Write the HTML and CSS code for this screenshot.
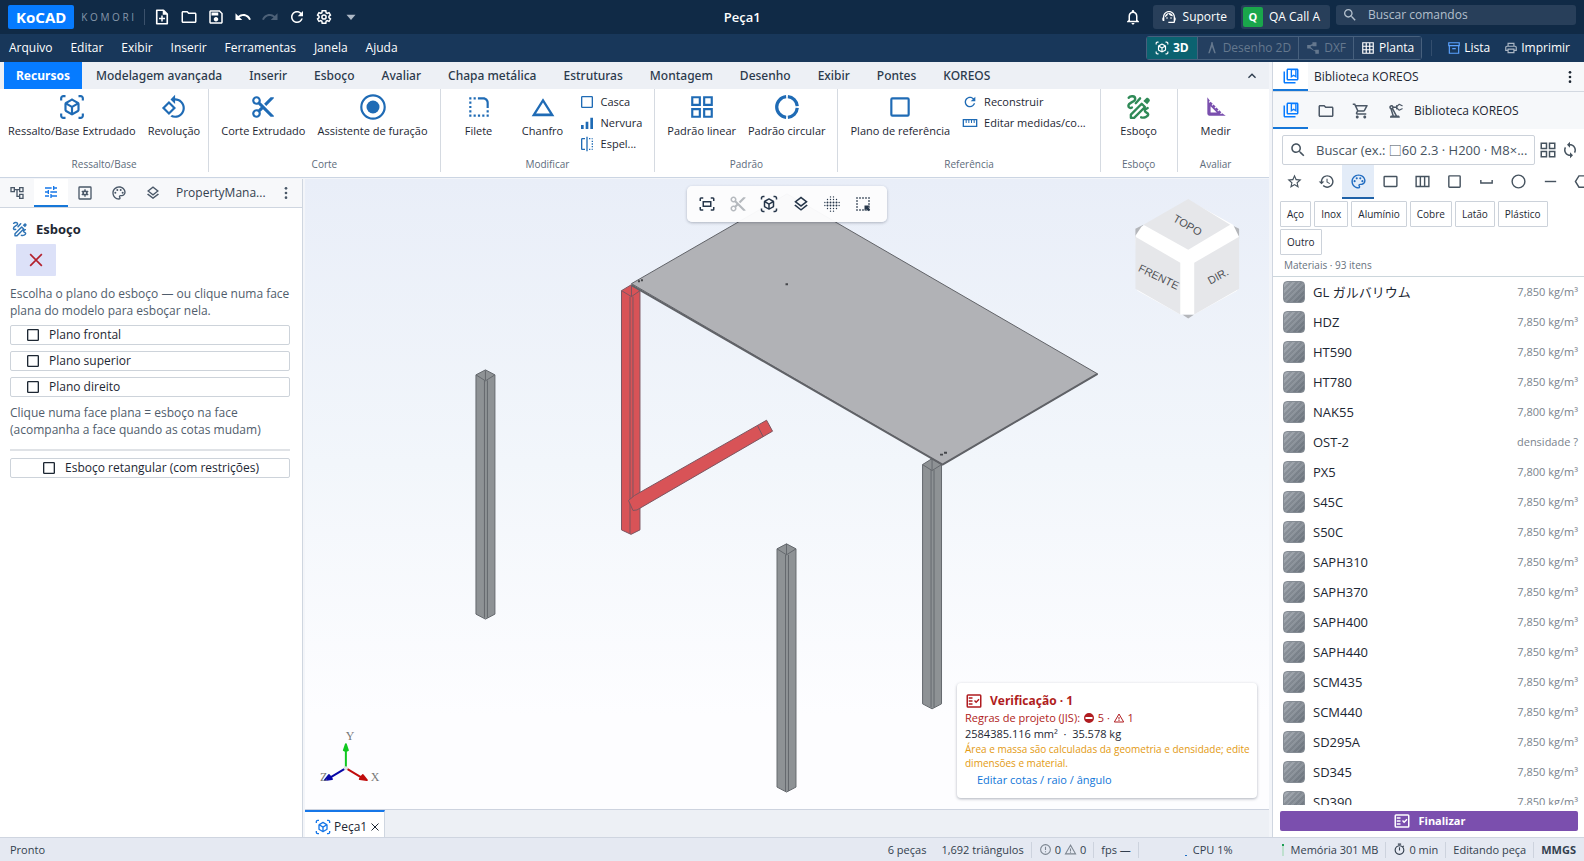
FILE: index.html
```html
<!DOCTYPE html>
<html lang="pt-BR">
<head>
<meta charset="utf-8">
<title>Peça1 - KoCAD</title>
<link rel="stylesheet" href="styles.css">
</head>
<body>
<svg class="sprite" aria-hidden="true">
<symbol id="i-new" viewBox="0 0 24 24"><path d="M14 3H5v18h14V8z" fill="none" stroke="currentColor" stroke-width="2.2" stroke-linejoin="round"/><path d="M13 2v7h7zM11 10h2v3h3v2h-3v3h-2v-3H8v-2h3z"/></symbol>
<symbol id="i-folder" viewBox="0 0 24 24"><path d="M9.17 6l2 2H20v10H4V6h5.17M10 4H4c-1.1 0-1.99.9-1.99 2L2 18c0 1.100.9 2 2 2h16c1.100 0 2-.9 2-2V8c0-1.100-.9-2-2-2h-8l-2-2z"/></symbol>
<symbol id="i-save" viewBox="0 0 24 24"><path fill-rule="evenodd" d="M17 3H5c-1.110 0-2 .9-2 2v14c0 1.100.89 2 2 2h14c1.100 0 2-.9 2-2V7l-4-4zm2 16H5V5h11.170L19 7.830V19zm-7-7c-1.660 0-3 1.340-3 3s1.340 3 3 3 3-1.340 3-3-1.340-3-3-3zM6 6h9v4H6z"/></symbol>
<symbol id="i-undo" viewBox="0 0 24 24"><path d="M12.500 8c-2.650 0-5.050.99-6.900 2.600L2 7v9h9l-3.620-3.620c1.390-1.160 3.160-1.880 5.120-1.880 3.540 0 6.550 2.310 7.600 5.500l2.370-.78C21.080 11.030 17.150 8 12.500 8z"/></symbol>
<symbol id="i-redo" viewBox="0 0 24 24"><path d="M18.400 10.600C16.550 8.990 14.150 8 11.500 8c-4.650 0-8.580 3.030-9.960 7.220L3.900 16c1.050-3.190 4.050-5.500 7.600-5.500 1.950 0 3.730.72 5.120 1.880L13 16h9V7l-3.600 3.600z"/></symbol>
<symbol id="i-refresh" viewBox="0 0 24 24"><path d="M17.650 6.350C16.200 4.900 14.210 4 12 4c-4.420 0-7.990 3.580-7.990 8s3.570 8 7.990 8c3.730 0 6.840-2.550 7.730-6h-2.080c-.82 2.330-3.040 4-5.650 4-3.310 0-6-2.690-6-6s2.690-6 6-6c1.660 0 3.140.69 4.220 1.780L13 11h7V4l-2.350 2.350z"/></symbol>
<symbol id="i-gear" viewBox="0 0 24 24"><path fill="none" stroke="currentColor" stroke-width="2" d="M18.600 12.900c.1-.6.1-1.200 0-1.800l2-1.600-1.900-3.300-2.400 1c-.5-.4-1-.7-1.500-.9L14.400 3.600h-4.800l-.4 2.700c-.6.2-1.100.5-1.500.9l-2.400-1-1.900 3.300 2 1.600c-.1.6-.1 1.200 0 1.800l-2 1.600 1.900 3.300 2.400-1c.5.4 1 .7 1.500.9l.4 2.700h4.800l.4-2.700c.6-.2 1.100-.5 1.500-.9l2.400 1 1.900-3.300z"/><circle cx="12" cy="12" r="2.800" fill="none" stroke="currentColor" stroke-width="2"/></symbol>
<symbol id="i-cube" viewBox="0 0 24 24"><path fill-rule="evenodd" d="M3 4c0-.55.45-1 1-1h2V1H4C2.340 1 1 2.340 1 4v2h2V4zM3 20v-2H1v2c0 1.660 1.340 3 3 3h2v-2H4c-.55 0-1-.45-1-1zM20 1h-2v2h2c.55 0 1 .45 1 1v2h2V4c0-1.660-1.340-3-3-3zM21 20c0 .55-.45 1-1 1h-2v2h2c1.660 0 3-1.340 3-3v-2h-2v2zM19 14.870V9.130c0-.72-.38-1.380-1-1.730l-5-2.880c-.31-.18-.65-.27-1-.27s-.69.090-1 .27L6 7.390c-.62.36-1 1.020-1 1.740v5.740c0 .72.38 1.380 1 1.730l5 2.880c.31.180.65.270 1 .27s.69-.090 1-.27l5-2.880c.62-.35 1-1.010 1-1.730zm-8 2.300l-4-2.300v-4.630l4 2.330v4.600zm1-6.330L8.040 8.530 12 6.250l3.960 2.280L12 10.840zm5 4.030l-4 2.300v-4.600l4-2.330v4.630z"/></symbol>
<symbol id="i-cut" viewBox="0 0 24 24"><path fill-rule="evenodd" d="M9.640 7.640c.23-.5.36-1.050.36-1.640 0-2.210-1.790-4-4-4S2 3.790 2 6s1.790 4 4 4c.59 0 1.140-.13 1.640-.36L10 12l-2.360 2.360C7.140 14.130 6.590 14 6 14c-2.210 0-4 1.790-4 4s1.790 4 4 4 4-1.790 4-4c0-.59-.13-1.140-.36-1.640L12 14l7 7h3v-1L9.640 7.640zM6 8c-1.100 0-2-.89-2-2s.9-2 2-2 2 .89 2 2-.9 2-2 2zm0 12c-1.100 0-2-.89-2-2s.9-2 2-2 2 .89 2 2-.9 2-2 2zM19 3l-6 6 2 2 7-7V3z"/></symbol>
<symbol id="i-revolve" viewBox="0 0 24 24"><path fill-rule="evenodd" d="M7.340 6.410L.86 12.900l6.490 6.480 6.490-6.480-6.500-6.490zM3.690 12.900l3.660-3.660L11 12.900l-3.660 3.660-3.650-3.660zm15.670-6.260C17.610 4.880 15.300 4 13 4V.76L8.760 5 13 9.240V6c1.790 0 3.580.68 4.950 2.050 2.730 2.730 2.730 7.170 0 9.900C16.580 19.320 14.790 20 13 20c-.97 0-1.940-.21-2.840-.61l-1.490 1.490C10.020 21.620 11.510 22 13 22c2.300 0 4.610-.88 6.360-2.640 3.520-3.510 3.520-9.210 0-12.720z"/></symbol>
<symbol id="i-hole" viewBox="0 0 24 24"><circle cx="12" cy="12" r="10.800" fill="none" stroke="currentColor" stroke-width="2"/><circle cx="12" cy="12" r="6"/></symbol>
<symbol id="i-fillet" viewBox="0 0 24 24"><path d="M19 19h2v2h-2v-2zm0-2h2v-2h-2v2zM3 13h2v-2H3v2zm0 4h2v-2H3v2zm0-8h2V7H3v2zm0-4h2V3H3v2zm4 0h2V3H7v2zm8 16h2v-2h-2v2zm-4 0h2v-2h-2v2zm-4 0h2v-2H7v2zm-4 0h2v-2H3v2zM21 8c0-2.760-2.240-5-5-5h-5v2h5c1.650 0 3 1.350 3 3v5h2V8z"/></symbol>
<symbol id="i-triangle" viewBox="0 0 24 24"><path fill-rule="evenodd" d="M12 7.770L18.390 18H5.610L12 7.770M12 4L1.500 20.500h21L12 4z"/></symbol>
<symbol id="i-square" viewBox="0 0 24 24"><rect x="4" y="4" width="16" height="16" rx="1" fill="none" stroke="currentColor" stroke-width="2"/></symbol>
<symbol id="i-bars" viewBox="0 0 24 24"><path d="M3 15h4v6H3zM10 10h4v11h-4zM17 4h4v17h-4z"/></symbol>
<symbol id="i-flip" viewBox="0 0 24 24"><path d="M15 21h2v-2h-2v2zm4-12h2V7h-2v2zM3 5v14c0 1.100.9 2 2 2h4v-2H5V5h4V3H5c-1.100 0-2 .9-2 2zm16-2v2h2c0-1.100-.9-2-2-2zm-8 20h2V1h-2v22zm8-6h2v-2h-2v2zM15 5h2V3h-2v2zm4 8h2v-2h-2v2zm0 8c1.100 0 2-.9 2-2h-2v2z"/></symbol>
<symbol id="i-grid" viewBox="0 0 24 24"><path fill="none" stroke="currentColor" stroke-width="2" d="M3 3h7v7H3zM14 3h7v7h-7zM3 14h7v7H3zM14 14h7v7h-7z"/></symbol>
<symbol id="i-ring" viewBox="0 0 24 24"><circle cx="12" cy="12" r="9.500" fill="none" stroke="currentColor" stroke-width="3" pathLength="360" stroke-dasharray="80 10 170 10 80 10" stroke-dashoffset="-5"/></symbol>
<symbol id="i-ruler" viewBox="0 0 24 24"><path d="M2 7h20v10H2z" fill="none" stroke="currentColor" stroke-width="2"/><path d="M5.500 7h1.500v5H5.500zM9.500 7H11v5H9.500zM13.500 7H15v5h-1.500zM17.500 7H19v5h-1.500z"/></symbol>
<symbol id="i-draw" viewBox="0 0 24 24"><path fill="none" stroke="currentColor" stroke-width="2.200" stroke-linecap="round" stroke-linejoin="round" d="M2.500 3.500C4 1.500 8.500 1.500 8.500 4.500S2 7.500 2.200 11c.1 1.700 1.800 2.300 3.300 1.500M4.500 22v-3L14.500 9l3 3-10 10zM9 8.500l4-4.500M14 21.500c2.500.8 6.500-.5 6.500-2.700 0-1.700-3.200-1.600-3.200-3.400 0-1.200 1.500-1.700 2.700-2.400"/><path d="M16 6.500l2.800-2.800c1.200-1.200 4.200 1.700 3 3L19.500 9.500z"/></symbol>
<symbol id="i-measure" viewBox="0 0 24 24"><path fill-rule="evenodd" d="M17.660 17.660l-1.060 1.060-.71-.71 1.060-1.060-1.940-1.940-1.060 1.060-.71-.71 1.060-1.060-1.940-1.940-1.060 1.060-.71-.71 1.060-1.060L9.700 9.700l-1.060 1.060-.71-.71 1.060-1.060-1.940-1.940-1.060 1.060-.71-.71 1.060-1.060L4 3v15c0 1.100.9 2 2 2h15zM7 17v-5.760L12.760 17H7z"/></symbol>
<symbol id="i-bell" viewBox="0 0 24 24"><path fill-rule="evenodd" d="M12 22c1.100 0 2-.9 2-2h-4c0 1.100.89 2 2 2zm6-6v-5c0-3.070-1.640-5.640-4.500-6.320V4c0-.83-.67-1.500-1.500-1.500s-1.500.67-1.500 1.500v.68C7.630 5.360 6 7.920 6 11v5l-2 2v1h16v-1l-2-2zm-2 1H8v-6c0-2.480 1.510-4.500 4-4.500s4 2.020 4 4.500v6z"/></symbol>
<symbol id="i-agent" viewBox="0 0 24 24"><path d="M21 12.220C21 6.730 16.740 3 12 3c-4.690 0-9 3.650-9 9.280-.6.340-1 .98-1 1.720v2c0 1.100.9 2 2 2h1v-6.100c0-3.870 3.130-7 7-7s7 3.130 7 7V19h-8v2h8c1.100 0 2-.9 2-2v-1.220c.59-.31 1-.92 1-1.640v-2.300c0-.7-.41-1.310-1-1.620zM18 11.030C17.520 8.180 15.040 6 12.050 6c-3.030 0-6.290 2.510-6.030 6.450 2.470-1.010 4.330-3.210 4.860-5.890 1.310 2.630 4 4.440 7.120 4.470z"/><circle cx="9" cy="13.500" r="1.200"/><circle cx="15" cy="13.500" r="1.200"/></symbol>
<symbol id="i-search" viewBox="0 0 24 24"><path fill-rule="evenodd" d="M15.500 14h-.79l-.28-.27C15.410 12.590 16 11.110 16 9.500 16 5.910 13.090 3 9.500 3S3 5.910 3 9.500 5.910 16 9.500 16c1.610 0 3.090-.59 4.230-1.570l.27.28v.79l5 4.990L20.490 19l-4.990-5zm-6 0C7.010 14 5 11.990 5 9.500S7.010 5 9.500 5 14 7.010 14 9.500 11.990 14 9.500 14z"/></symbol>
<symbol id="i-books" viewBox="0 0 24 24"><path fill-rule="evenodd" d="M4 6H2v14c0 1.100.9 2 2 2h14v-2H4V6zM20 2H8c-1.100 0-2 .9-2 2v12c0 1.100.9 2 2 2h12c1.100 0 2-.9 2-2V4c0-1.100-.9-2-2-2zm0 14H8V4h12v12z"/><path d="M12.500 3.500h6v9.500l-3-2-3 2z" fill="none" stroke="currentColor" stroke-width="1.800"/></symbol>
<symbol id="i-cart" viewBox="0 0 24 24"><path fill-rule="evenodd" d="M15.550 13c.75 0 1.410-.41 1.750-1.030l3.580-6.490c.37-.66-.11-1.480-.87-1.480H5.210l-.94-2H1v2h2l3.600 7.590-1.350 2.440C4.520 15.370 5.480 17 7 17h12v-2H7l1.100-2h7.450zM6.160 6h12.150l-2.760 5H8.530L6.160 6zM7 18c-1.100 0-1.990.9-1.990 2S5.900 22 7 22s2-.9 2-2-.9-2-2-2zm10 0c-1.100 0-1.990.9-1.990 2s.89 2 1.990 2 2-.9 2-2-.9-2-2-2z"/></symbol>
<symbol id="i-robot" viewBox="0 0 24 24"><path fill-rule="evenodd" d="M19.930 8.350l-3.600 1.680L14 7.700V6.300l2.330-2.330 3.600 1.680c.38.18.82.01 1-.36.18-.38.01-.82-.36-1l-3.920-1.830c-.38-.18-.83-.1-1.130.2L13.780 4.400c-.18-.24-.46-.4-.78-.4-.55 0-1 .45-1 1v1H8.820C8.400 4.840 7.300 4 6 4 4.340 4 3 5.340 3 7c0 1.100.6 2.050 1.480 2.580L7.080 18H6c-1.100 0-2 .9-2 2v1h13v-1c0-1.100-.9-2-2-2h-1.620L8.410 8.770c.17-.24.31-.49.41-.77H12v1c0 .55.45 1 1 1 .32 0 .6-.16.78-.4l1.740 1.740c.3.3.75.38 1.130.2l3.920-1.830c.38-.18.54-.62.36-1-.18-.37-.62-.54-1-.36zM6 8c-.55 0-1-.45-1-1s.45-1 1-1 1 .45 1 1-.45 1-1 1zm5.110 10H9.170l-2.460-8h.1l4.300 8z"/></symbol>
<symbol id="i-sync" viewBox="0 0 24 24"><path d="M12 4V1L8 5l4 4V6c3.310 0 6 2.690 6 6 0 1.010-.25 1.970-.7 2.800l1.460 1.460C19.540 15.030 20 13.570 20 12c0-4.420-3.580-8-8-8zm0 14c-3.310 0-6-2.690-6-6 0-1.010.25-1.970.7-2.800L5.240 7.740C4.460 8.970 4 10.430 4 12c0 4.420 3.580 8 8 8v3l4-4-4-4v3z"/></symbol>
<symbol id="i-star" viewBox="0 0 24 24"><path fill-rule="evenodd" d="M22 9.240l-7.190-.62L12 2 9.190 8.630 2 9.240l5.460 4.730L5.820 21 12 17.270 18.180 21l-1.630-7.030L22 9.240zM12 15.400l-3.760 2.270 1-4.280-3.320-2.880 4.380-.38L12 6.100l1.710 4.040 4.380.38-3.320 2.880 1 4.280L12 15.400z"/></symbol>
<symbol id="i-history" viewBox="0 0 24 24"><path d="M13 3c-4.970 0-9 4.030-9 9H1l3.890 3.890.07.14L9 12H6c0-3.870 3.130-7 7-7s7 3.130 7 7-3.130 7-7 7c-1.930 0-3.680-.79-4.940-2.060l-1.420 1.420C8.270 19.990 10.510 21 13 21c4.970 0 9-4.030 9-9s-4.030-9-9-9zm-1 5v5l4.280 2.540.72-1.210-3.500-2.080V8H12z"/></symbol>
<symbol id="i-palette" viewBox="0 0 24 24"><path fill-rule="evenodd" d="M12 22C6.490 22 2 17.510 2 12S6.490 2 12 2s10 4.040 10 9c0 3.310-2.690 6-6 6h-1.770c-.28 0-.5.22-.5.5 0 .12.050.23.13.33.41.47.64 1.060.64 1.670 0 1.380-1.120 2.500-2.500 2.500zm0-18c-4.410 0-8 3.590-8 8s3.590 8 8 8c.28 0 .5-.22.5-.5 0-.16-.080-.28-.14-.35-.41-.46-.63-1.050-.63-1.650 0-1.380 1.120-2.500 2.500-2.500H16c2.210 0 4-1.790 4-4 0-3.860-3.590-7-8-7z"/><circle cx="6.500" cy="11.500" r="1.500"/><circle cx="9.500" cy="7.500" r="1.500"/><circle cx="14.500" cy="7.500" r="1.500"/><circle cx="17.500" cy="11.500" r="1.500"/></symbol>
<symbol id="i-layers" viewBox="0 0 24 24"><path fill-rule="evenodd" d="M11.990 18.540l-7.370-5.730L3 14.070l9 7 9-7-1.630-1.270zM12 16l7.360-5.730L21 9l-9-7-9 7 1.630 1.270L12 16zm0-11.470L17.740 9 12 13.470 6.260 9 12 4.530z"/></symbol>
<symbol id="i-tune" viewBox="0 0 24 24"><path d="M3 17v2h6v-2H3zM3 5v2h10V5H3zm10 16v-2h8v-2h-8v-2h-2v6h2zM7 9v2H3v2h4v2h2V9H7zm14 4v-2H11v2h10zm-6-4h2V7h4V5h-4V3h-2v6z"/></symbol>
<symbol id="i-tree" viewBox="0 0 24 24"><path fill-rule="evenodd" d="M22 11V3h-7v3H9V3H2v8h7V8h2v10h4v3h7v-8h-7v3h-2V8h2v3h7zM7 9H4V5h3v4zm10 6h3v4h-3v-4zm0-10h3v4h-3V5z"/></symbol>
<symbol id="i-config" viewBox="0 0 24 24"><rect x="3" y="3" width="18" height="18" rx="1" fill="none" stroke="currentColor" stroke-width="2"/><circle cx="12" cy="12" r="2.800" fill="none" stroke="currentColor" stroke-width="2.400"/><path d="M12 6.500v11M7.200 9.200l9.600 5.600M7.200 14.800l9.600-5.600" stroke="currentColor" stroke-width="2" stroke-dasharray="2 7.100"/></symbol>
<symbol id="i-more" viewBox="0 0 24 24"><circle cx="12" cy="5" r="2"/><circle cx="12" cy="12" r="2"/><circle cx="12" cy="19" r="2"/></symbol>
<symbol id="i-up" viewBox="0 0 24 24"><path d="M12 8l-6 6 1.410 1.410L12 10.830l4.590 4.580L18 14z"/></symbol>
<symbol id="i-down" viewBox="0 0 24 24"><path d="M6 9h12l-6 7z"/></symbol>
<symbol id="i-close" viewBox="0 0 24 24"><path d="M5 5l14 14M19 5L5 19" fill="none" stroke="currentColor" stroke-width="2"/></symbol>
<symbol id="i-check" viewBox="0 0 24 24"><rect x="3" y="4" width="18" height="16" rx="1" fill="none" stroke="currentColor" stroke-width="2"/><path d="M19.410 10.420L17.990 9l-3.170 3.170-1.410-1.420L12 12.160 14.820 15l4.590-4.580zM5 7h5v2H5zM5 11h5v2H5zM5 15h5v2H5z"/></symbol>
<symbol id="i-timer" viewBox="0 0 24 24"><path fill-rule="evenodd" d="M15 1H9v2h6V1zm-4 13h2V8h-2v6zm8.030-6.610l1.420-1.420c-.43-.51-.9-.99-1.410-1.410l-1.420 1.420C16.070 4.740 14.120 4 12 4c-4.970 0-9 4.030-9 9s4.020 9 9 9 9-4.030 9-9c0-2.120-.74-4.070-1.970-5.610zM12 20c-3.870 0-7-3.130-7-7s3.130-7 7-7 7 3.130 7 7-3.130 7-7 7z"/></symbol>
<symbol id="i-error" viewBox="0 0 24 24"><circle cx="12" cy="12" r="9" fill="none" stroke="currentColor" stroke-width="2"/><path d="M11 7h2v6h-2zM11 15h2v2h-2z"/></symbol>
<symbol id="i-warn" viewBox="0 0 24 24"><path d="M12 4L2.700 20h18.600z" fill="none" stroke="currentColor" stroke-width="2"/><path d="M11 10h2v5h-2zM11 16h2v2h-2z"/></symbol>
<symbol id="i-stop" viewBox="0 0 24 24"><path fill-rule="evenodd" d="M12 2a10 10 0 100 20 10 10 0 000-20zM5 10h14v4H5z"/></symbol>
<symbol id="i-print" viewBox="0 0 24 24"><path fill-rule="evenodd" d="M19 8h-1V3H6v5H5c-1.660 0-3 1.340-3 3v6h4v4h12v-4h4v-6c0-1.660-1.340-3-3-3zM8 5h8v3H8V5zm8 14H8v-4h8v4zm2-4v-2H6v2H4v-4c0-.55.45-1 1-1h14c.55 0 1 .45 1 1v4h-2z"/></symbol>
<symbol id="i-table" viewBox="0 0 24 24"><path d="M3 3h18v18H3zM9 3v18M15 3v18M3 9h18M3 15h18" fill="none" stroke="currentColor" stroke-width="2"/></symbol>
<symbol id="i-box" viewBox="0 0 24 24"><path d="M3 3h18v5H3zM4 8v13h16V8M9 13h6" fill="none" stroke="currentColor" stroke-width="2"/></symbol>
<symbol id="i-compass" viewBox="0 0 24 24"><path d="M10.500 2h3v3l5 16H16l-4-11-4 11H5.500l5-16z"/></symbol>
<symbol id="i-share" viewBox="0 0 24 24"><path d="M11 2h7v7h-7v-1.500L7.500 10l6 6H16v-1h6v7h-6v-4l-9-5H2V7h5l4-2z"/></symbol>
<symbol id="i-fit" viewBox="0 0 24 24"><path fill="none" stroke="currentColor" stroke-width="2" d="M17 4h3c.6 0 1 .4 1 1v3M7 4H4c-.6 0-1 .4-1 1v3M21 16v3c0 .6-.4 1-1 1h-3M3 16v3c0 .6.400 1 1 1h3M7 9h10v6H7z"/></symbol>
<symbol id="i-blur" viewBox="0 0 24 24"><g fill="none" stroke="currentColor" stroke-linecap="round"><path stroke-width="2.600" stroke-dasharray="0 4" d="M6 10h12.100M6 14h12.100"/><path stroke-width="1.800" stroke-dasharray="0 4" d="M6 6h12.100M6 18h12.100M2.500 10h.1M2.500 14h.1M21.500 10h.1M21.500 14h.1M10 2.500h4.100M10 21.500h4.100"/></g></symbol>
<symbol id="i-select" viewBox="0 0 24 24"><path d="M4 4h16v16H4z" fill="none" stroke="currentColor" stroke-width="2" stroke-dasharray="2 2" stroke-dashoffset="1"/><path d="M14 14h7l-2.200 2.200L21.500 19 19 21.500l-2.800-2.700L14 21z"/></symbol>
<symbol id="i-rect" viewBox="0 0 24 24"><rect x="3" y="5" width="18" height="14" rx="1" fill="none" stroke="currentColor" stroke-width="2"/></symbol>
<symbol id="i-columns" viewBox="0 0 24 24"><path d="M3 5h18v14H3zM9 5v14M15 5v14" fill="none" stroke="currentColor" stroke-width="2"/></symbol>
<symbol id="i-space" viewBox="0 0 24 24"><path d="M4 10v4h16v-4" fill="none" stroke="currentColor" stroke-width="2"/></symbol>
<symbol id="i-circle" viewBox="0 0 24 24"><circle cx="12" cy="12" r="9" fill="none" stroke="currentColor" stroke-width="2"/></symbol>
<symbol id="i-line" viewBox="0 0 24 24"><path d="M4 11h16v2H4z"/></symbol>
<symbol id="i-hexagon" viewBox="0 0 24 24"><path d="M7 4h10l5 8-5 8H7l-5-8z" fill="none" stroke="currentColor" stroke-width="2"/></symbol>
</svg>

<header class="titlebar">
  <div class="title-left">
    <strong class="logo">KoCAD</strong>
    <span class="brand">K O M O R I</span>
    <button class="quick quick-first" aria-label="Novo"><svg><use href="#i-new"/></svg></button>
    <button class="quick" aria-label="Abrir"><svg><use href="#i-folder"/></svg></button>
    <button class="quick" aria-label="Salvar"><svg><use href="#i-save"/></svg></button>
    <button class="quick" aria-label="Desfazer"><svg><use href="#i-undo"/></svg></button>
    <button class="quick off" aria-label="Refazer" disabled><svg><use href="#i-redo"/></svg></button>
    <button class="quick" aria-label="Reconstruir"><svg><use href="#i-refresh"/></svg></button>
    <button class="quick" aria-label="Opções"><svg><use href="#i-gear"/></svg></button>
    <button class="quick soft" aria-label="Mais"><svg><use href="#i-down"/></svg></button>
  </div>
  <h1 class="doc-title">Peça1</h1>
  <div class="title-right">
    <button class="quick" aria-label="Notificações"><svg><use href="#i-bell"/></svg></button>
    <button class="pill"><svg><use href="#i-agent"/></svg>Suporte</button>
    <button class="pill user"><span class="avatar">Q</span>QA Call A</button>
    <label class="cmd"><svg><use href="#i-search"/></svg><input type="text" placeholder="Buscar comandos" aria-label="Buscar comandos"></label>
  </div>
</header>

<nav class="menubar">
  <div class="menus">
    <button>Arquivo</button><button>Editar</button><button>Exibir</button><button>Inserir</button><button>Ferramentas</button><button>Janela</button><button>Ajuda</button>
  </div>
  <div class="modes">
    <div class="segment">
      <button class="on"><svg><use href="#i-cube"/></svg>3D</button>
      <button disabled><svg><use href="#i-compass"/></svg>Desenho 2D</button>
      <button disabled><svg><use href="#i-share"/></svg>DXF</button>
      <button class="plan"><svg><use href="#i-table"/></svg>Planta</button>
    </div>
    <button class="link list"><svg><use href="#i-box"/></svg>Lista</button>
    <button class="link print"><svg><use href="#i-print"/></svg>Imprimir</button>
  </div>
</nav>

<div class="workspace">
  <div class="work">
    <nav class="ribbon-tabs">
      <button class="on">Recursos</button><button>Modelagem avançada</button><button>Inserir</button><button>Esboço</button><button>Avaliar</button><button>Chapa metálica</button><button>Estruturas</button><button>Montagem</button><button>Desenho</button><button>Exibir</button><button>Pontes</button><button>KOREOS</button>
      <button class="collapse" aria-label="Recolher"><svg><use href="#i-up"/></svg></button>
    </nav>
    <div class="ribbon">
      <section class="group"><div class="tools">
        <button class="tool"><svg><use href="#i-cube"/></svg>Ressalto/Base Extrudado</button>
        <button class="tool"><svg><use href="#i-revolve"/></svg>Revolução</button>
      </div><h2>Ressalto/Base</h2></section>
      <section class="group"><div class="tools">
        <button class="tool"><svg><use href="#i-cut"/></svg>Corte Extrudado</button>
        <button class="tool"><svg><use href="#i-hole"/></svg>Assistente de furação</button>
      </div><h2>Corte</h2></section>
      <section class="group"><div class="tools">
        <button class="tool"><svg><use href="#i-fillet"/></svg>Filete</button>
        <button class="tool"><svg><use href="#i-triangle"/></svg>Chanfro</button>
        <div class="mini">
          <button><svg><use href="#i-square"/></svg>Casca</button>
          <button><svg><use href="#i-bars"/></svg>Nervura</button>
          <button><svg><use href="#i-flip"/></svg>Espel...</button>
        </div>
      </div><h2>Modificar</h2></section>
      <section class="group"><div class="tools">
        <button class="tool"><svg><use href="#i-grid"/></svg>Padrão linear</button>
        <button class="tool"><svg><use href="#i-ring"/></svg>Padrão circular</button>
      </div><h2>Padrão</h2></section>
      <section class="group"><div class="tools">
        <button class="tool"><svg><use href="#i-square"/></svg>Plano de referência</button>
        <div class="mini wide">
          <button><svg><use href="#i-refresh"/></svg>Reconstruir</button>
          <button><svg><use href="#i-ruler"/></svg>Editar medidas/co...</button>
        </div>
      </div><h2>Referência</h2></section>
      <section class="group"><div class="tools">
        <button class="tool green"><svg><use href="#i-draw"/></svg>Esboço</button>
      </div><h2>Esboço</h2></section>
      <section class="group"><div class="tools">
        <button class="tool purple"><svg><use href="#i-measure"/></svg>Medir</button>
      </div><h2>Avaliar</h2></section>
    </div>

    <div class="stage">
      <aside class="manager">
        <div class="side-tabs">
          <button aria-label="Árvore"><svg><use href="#i-tree"/></svg></button>
          <button class="on" aria-label="Propriedades"><svg><use href="#i-tune"/></svg></button>
          <button aria-label="Configurações"><svg><use href="#i-config"/></svg></button>
          <button aria-label="Aparência"><svg><use href="#i-palette"/></svg></button>
          <button aria-label="Camadas"><svg><use href="#i-layers"/></svg></button>
          <span class="side-name">PropertyMana...</span>
          <button class="dots" aria-label="Mais opções"><svg><use href="#i-more"/></svg></button>
        </div>
        <div class="props">
          <h2><svg><use href="#i-draw"/></svg>Esboço</h2>
          <button class="cancel" aria-label="Cancelar"><svg><use href="#i-close"/></svg></button>
          <p>Escolha o plano do esboço — ou clique numa face plana do modelo para esboçar nela.</p>
          <div class="planes">
            <button><svg><use href="#i-square"/></svg>Plano frontal</button>
            <button><svg><use href="#i-square"/></svg>Plano superior</button>
            <button><svg><use href="#i-square"/></svg>Plano direito</button>
          </div>
          <p>Clique numa face plana = esboço na face (acompanha a face quando as cotas mudam)</p>
          <hr>
          <div class="planes"><button class="center"><svg><use href="#i-square"/></svg>Esboço retangular (com restrições)</button></div>
        </div>
      </aside>

      <main class="document">
        <div class="viewport">
          <svg class="scene" viewBox="304 179 967 630" role="img" aria-label="Modelo 3D">
            <g class="steel">
              <path d="M475.500 374.500l9.500-5 9.500 5v240l-9.500 5-9.500-5z"/><path d="M475.500 374.500l9.500 6 9.500-6M484 380v238M487 380v238M485 370v10"/>
              <path d="M777.500 549l9.500-5 9.500 5v239l-9.500 5-9.500-5z"/><path d="M777.500 549l9.500 6 9.500-6M786 555v237M789 555v237M787 544v11"/>
              <path d="M923.500 464.500l9.500-6 9.500 6v240l-9.500 5-9.500-5z"/><path d="M923.500 464.500l9.500 6 9.500-6M932 470v238M935 470v238M933 459v11"/>
            </g>
            <g class="marked">
              <path d="M621.500 290l10-6 8.500 6v240l-9 4.500-9.500-4.500z"/><path d="M621.500 290l10 6 8.500-6M630 296v238M633 296v205M631.500 285v11"/>
              <path d="M628.500 500.500l6-5L767 420l6 11-136 79-4 .5z"/><path d="M758 425.500l5.500 11"/>
            </g>
            <path class="plate" d="M631.500 283L787.500 193 1099 373.500 943.500 464.500z"/>
            <path class="rim" d="M631.500 284.500L943.500 464.500l155.500-91"/>
            <path class="holes" d="M638 280.500h2m1-1h2M786 283.500h2.500M941 454.500h3m1-2h3"/>
            <g class="navcube">
              <path class="nav-corner" d="M1137 228l8-4-8 14zM1241 228l-8-4 8 14zM1184 314h12l-6 4z"/>
              <path class="nav-edge" d="M1143 226l47-27 45 25 6 12-2 54-43 24h-14l-43-24-2-55z"/>
              <path class="nav-face" d="M1190 198l42 26-42 25-45-25zM1137 236l45 26v52l-45-26zM1241 236l-45 26v52l45-26z"/>
              <text transform="translate(1174 220) rotate(30)">TOPO</text>
              <text transform="translate(1139 270) rotate(26)">FRENTE</text>
              <text transform="translate(1212 284) rotate(-28)">DIR.</text>
            </g>
            <g class="axes">
              <path stroke="#10c820" fill="#10c820" d="M345 769v-17l-2-1 2-6 2 6-2 1"/>
              <path stroke="#c00c0c" fill="#c00c0c" d="M345 769l15 9-1 2 7 1-4-5-2 2"/>
              <path stroke="#0808a8" fill="#0808a8" d="M345 769l-15 9 1 2-7 1 4-5 2 2"/>
              <circle cx="345" cy="769" r="2"/>
              <text x="345" y="741">Y</text><text x="370" y="782">X</text><text x="319" y="782">Z</text>
            </g>
          </svg>
          <div class="view-tools">
            <button aria-label="Ajustar"><svg><use href="#i-fit"/></svg></button>
            <button aria-label="Cortar" disabled><svg><use href="#i-cut"/></svg></button>
            <button aria-label="Vista"><svg><use href="#i-cube"/></svg></button>
            <button aria-label="Camadas"><svg><use href="#i-layers"/></svg></button>
            <button aria-label="Grade"><svg><use href="#i-blur"/></svg></button>
            <button aria-label="Selecionar"><svg><use href="#i-select"/></svg></button>
          </div>
          <section class="check-card">
            <h2><svg><use href="#i-check"/></svg>Verificação · 1</h2>
            <p class="rules">Regras de projeto (JIS): <svg><use href="#i-stop"/></svg> 5 · <svg><use href="#i-warn"/></svg> 1</p>
            <p>2584385.116 mm² &nbsp;·&nbsp; 35.578 kg</p>
            <p class="hint">Área e massa são calculadas da geometria e densidade; edite dimensões e material.</p>
            <a href="#">Editar cotas / raio / ângulo</a>
          </section>
        </div>
        <div class="doc-tabs">
          <div class="doc-tab"><svg><use href="#i-cube"/></svg>Peça1<button aria-label="Fechar"><svg><use href="#i-close"/></svg></button></div>
        </div>
      </main>
    </div>
  </div>

  <aside class="library">
    <div class="lib-head">
      <button class="on" aria-label="Biblioteca"><svg><use href="#i-books"/></svg></button>
      <span>Biblioteca KOREOS</span>
      <button class="dots" aria-label="Mais opções"><svg><use href="#i-more"/></svg></button>
    </div>
    <div class="lib-tabs">
      <button class="on" aria-label="Coleções"><svg><use href="#i-books"/></svg></button>
      <button aria-label="Pastas"><svg><use href="#i-folder"/></svg></button>
      <button aria-label="Loja"><svg><use href="#i-cart"/></svg></button>
      <button aria-label="Máquinas"><svg><use href="#i-robot"/></svg></button>
      <span>Biblioteca KOREOS</span>
    </div>
    <div class="lib-search">
      <label><svg><use href="#i-search"/></svg><input type="text" placeholder="Buscar (ex.: □60 2.3 · H200 · M8×..." aria-label="Buscar na biblioteca"></label>
      <button aria-label="Grade"><svg><use href="#i-grid"/></svg></button>
      <button aria-label="Atualizar"><svg><use href="#i-sync"/></svg></button>
    </div>
    <div class="cats">
      <button aria-label="Favoritos"><svg><use href="#i-star"/></svg></button>
      <button aria-label="Recentes"><svg><use href="#i-history"/></svg></button>
      <button class="on" aria-label="Materiais"><svg><use href="#i-palette"/></svg></button>
      <button aria-label="Chapas"><svg><use href="#i-rect"/></svg></button>
      <button aria-label="Perfis"><svg><use href="#i-columns"/></svg></button>
      <button aria-label="Tubos"><svg><use href="#i-square"/></svg></button>
      <button aria-label="Canais"><svg><use href="#i-space"/></svg></button>
      <button aria-label="Redondos"><svg><use href="#i-circle"/></svg></button>
      <button aria-label="Barras"><svg><use href="#i-line"/></svg></button>
      <button aria-label="Parafusos"><svg><use href="#i-hexagon"/></svg></button>
    </div>
    <div class="chips"><button>Aço</button><button>Inox</button><button>Alumínio</button><button>Cobre</button><button>Latão</button><button>Plástico</button><button>Outro</button></div>
    <p class="count">Materiais · 93 itens</p>
    <ul class="materials">
      <li><i></i><b>GL <em lang="ja">ガルバリウム</em></b><span>7,850 kg/m³</span></li>
      <li><i></i><b>HDZ</b><span>7,850 kg/m³</span></li>
      <li><i></i><b>HT590</b><span>7,850 kg/m³</span></li>
      <li><i></i><b>HT780</b><span>7,850 kg/m³</span></li>
      <li><i></i><b>NAK55</b><span>7,800 kg/m³</span></li>
      <li><i></i><b>OST-2</b><span>densidade ?</span></li>
      <li><i></i><b>PX5</b><span>7,800 kg/m³</span></li>
      <li><i></i><b>S45C</b><span>7,850 kg/m³</span></li>
      <li><i></i><b>S50C</b><span>7,850 kg/m³</span></li>
      <li><i></i><b>SAPH310</b><span>7,850 kg/m³</span></li>
      <li><i></i><b>SAPH370</b><span>7,850 kg/m³</span></li>
      <li><i></i><b>SAPH400</b><span>7,850 kg/m³</span></li>
      <li><i></i><b>SAPH440</b><span>7,850 kg/m³</span></li>
      <li><i></i><b>SCM435</b><span>7,850 kg/m³</span></li>
      <li><i></i><b>SCM440</b><span>7,850 kg/m³</span></li>
      <li><i></i><b>SD295A</b><span>7,850 kg/m³</span></li>
      <li><i></i><b>SD345</b><span>7,850 kg/m³</span></li>
      <li><i></i><b>SD390</b><span>7,850 kg/m³</span></li>
    </ul>
    <button class="finish"><svg><use href="#i-check"/></svg>Finalizar</button>
  </aside>
</div>

<footer class="status">
  <span class="ready">Pronto</span>
  <span class="cell plain">6 peças</span>
  <span class="cell">1,692 triângulos</span>
  <span class="cell issues"><svg><use href="#i-error"/></svg>0 <svg><use href="#i-warn"/></svg>0</span>
  <span class="cell">fps —</span>
  <span class="cell plain meter"><svg viewBox="0 0 48 14"><path d="M46 12h2v1h-2z" fill="#1f6fc4"/></svg>CPU 1%</span>
  <span class="cell meter"><svg viewBox="0 0 48 14"><path d="M45 1h2v12h-2z" fill="#bfe0cf"/><path d="M45 1h2v2h-2z" fill="#1e9e55"/></svg>Memória 301 MB</span>
  <span class="cell"><svg><use href="#i-timer"/></svg>0 min</span>
  <span class="cell">Editando peça</span>
  <strong class="cell plain">MMGS</strong>
</footer>
</body>
</html>
```
FILE: styles.css
```css
* { box-sizing: border-box; }
html, body { height: 100%; }
body {
  margin: 0;
  display: flex;
  flex-direction: column;
  overflow: hidden;
  font: 12px/16px "Open Sans", "Noto Sans", "Noto Sans CJK JP", sans-serif;
  color: #1d2733;
  background: #fff;
}
h1, h2, p, ul { margin: 0; padding: 0; font-weight: 400; }
button, input { font: inherit; color: inherit; border: 0; background: none; padding: 0; margin: 0; }
button { display: inline-flex; align-items: center; justify-content: center; white-space: nowrap; }
svg { width: 16px; height: 16px; fill: currentColor; flex: none; }
.sprite { position: absolute; width: 0; height: 0; }

/* title bar */
.titlebar { flex: none; height: 34px; display: flex; align-items: center; justify-content: space-between; padding: 0 8px; background: #102a46; color: #fff; }
.title-left, .title-right { display: flex; align-items: center; }
.logo { font: 700 15px/24px "Noto Sans", sans-serif; background: #067bff; border-radius: 2px; padding: 0 8px; }
.brand { color: #8797aa; font-size: 10px; padding: 0 10px 0 7px; border-right: 1px solid #3b516b; margin-right: 4px; }
.quick { width: 27px; height: 24px; }
.quick svg { width: 18px; height: 18px; }
.quick.off { color: #4d6178; }
.quick.soft { color: #aeb9c6; }
.doc-title { font-size: 13px; font-weight: 600; }
.title-right { gap: 6px; }
.pill { height: 24px; gap: 6px; padding: 0 8px; background: #283f5a; border-radius: 3px; }
.pill.user { padding: 0 10px 0 2px; }
.avatar { width: 20px; height: 20px; line-height: 20px; font-size: 11px; font-weight: 700; background: #1aa64b; border-radius: 2px; }
.cmd { display: flex; align-items: center; gap: 10px; width: 240px; height: 20px; padding: 0 6px; margin-bottom: 4px; background: #283f5a; border-radius: 3px; color: #b4c0cd; }
.cmd input { flex: 1; min-width: 0; }
.cmd input::placeholder, .lib-search input::placeholder { color: inherit; opacity: 1; }

/* menu bar */
.menubar { flex: none; height: 28px; display: flex; justify-content: space-between; background: #18375a; color: #fff; }
.menus, .modes { display: flex; align-items: center; }
.menus button { height: 28px; padding: 0 9px; }
.segment { display: flex; height: 24px; border: 1px solid #47607d; border-radius: 3px; margin-right: 9px; }
.segment button { gap: 4px; padding: 0 7px; background: #243f60; color: #65788e; border-right: 1px solid #47607d; }
.segment button:last-child { border-right: 0; }
.segment .on { background: #0b6270; color: #fff; font-weight: 700; padding: 0 8px; }
.segment .plan { color: #fff; }
.modes svg { width: 14px; height: 14px; }
.link { gap: 3px; padding: 0 7px; }
.list { border-left: 1px solid #334e6e; height: 16px; padding-left: 15px; }
.list svg { color: #5aa2ff; }
.print svg { color: #aab6c4; }
.modes { padding-right: 7px; }

/* main split */
.workspace { flex: 1; min-height: 0; display: flex; }
.work { flex: 1; min-width: 0; display: flex; flex-direction: column; background: #f3f5f9; border-right: 1px solid #cfd6e0; padding-right: 3px; }

/* ribbon */
.ribbon-tabs { display: flex; gap: 1px; height: 27px; padding-left: 4px; background: #edf0f5; font: 500 12px/16px "Noto Sans", sans-serif; color: #2b3a4c; }
.ribbon-tabs button { padding: 0 13px; }
.ribbon-tabs .on { background: #067bff; color: #fff; font-weight: 700; padding: 0 12px; }
.ribbon-tabs .collapse { margin-left: auto; padding: 0 9px; }
.ribbon { display: flex; height: 89px; background: #fff; border-bottom: 1px solid #cbd5e3; }
.group { display: flex; flex-direction: column; justify-content: space-between; align-items: center; padding: 5px 6px 0; margin: 0 0 5px; border-right: 1px solid #d5dae1; }
.group:first-child { padding: 5px 2px 0; }
.group:last-child { border-right: 0; }
.group h2 { font-size: 10px; line-height: 14px; color: #5d6b7b; padding-bottom: 1px; }
.tools { display: flex; align-items: flex-start; height: 60px; }
.tool { flex-direction: column; min-width: 64px; gap: 3px; padding: 0 6px; font-size: 11px; line-height: 16px; color: #1d2733; }
.tool svg { width: 26px; height: 26px; color: #1f6bb5; }
.green svg { color: #2f8a57; }
.purple svg { color: #7a4fae; }
.mini { display: flex; flex-direction: column; align-items: flex-start; font-size: 11px; padding: 0 6px 0 4px; }
.mini.wide { padding: 0 8px 0 6px; }
.mini button { height: 21px; gap: 6px; padding-bottom: 6px; }
.mini svg { color: #1f6bb5; }

/* property manager */
.stage { flex: 1; min-height: 0; display: flex; padding-top: 1px; }
.manager { width: 303px; flex: none; background: #fff; border-right: 1px solid #cfd6e0; }
.side-tabs { display: flex; align-items: center; height: 29px; background: #f7f8fa; border-bottom: 1px solid #cfd6e0; color: #4a5868; }
.side-tabs button { width: 34px; height: 28px; }
.side-tabs .on { background: #fff; color: #1677e8; border-bottom: 2px solid #1677d8; }
.side-name { flex: 1; padding-left: 6px; color: #33404f; }
.side-tabs .dots { width: 32px; }
.props { padding: 12px 12px 0 10px; }
.props h2 { display: flex; align-items: center; gap: 8px; font-size: 13px; font-weight: 700; line-height: 18px; padding-left: 2px; }
.props h2 svg { color: #2f74b5; }
.cancel { width: 40px; height: 32px; margin: 6px 0 9px 6px; background: #dce1f8; border-radius: 1px; color: #b3202c; }
.cancel svg { width: 20px; height: 20px; }
.props p { line-height: 17px; color: #505d6c; }
.planes { display: grid; gap: 6px; margin: 6px 0 7px; }
.planes button { justify-content: flex-start; gap: 8px; height: 20px; padding: 0 14px; border: 1px solid #cdd3da; border-radius: 2px; }
.planes .center { justify-content: center; }
hr { border: 0; border-top: 2px solid #dfe2e6; margin: 11px 0 7px; }

/* viewport */
.document { flex: 1; min-width: 0; display: flex; flex-direction: column; padding-left: 2px; }
.viewport { flex: 1; min-height: 0; position: relative; background: linear-gradient(#e9eef8, #f2f6fb 45%, #fdfdff 85%); border-bottom: 1px solid #cdd3df; }
.scene { position: absolute; inset: 0; width: 100%; height: 100%; }
.scene path { stroke-linejoin: round; }
.steel path { fill: #8e9295; stroke: #64686d; }
.marked path { fill: #d85357; stroke: #7b5560; }
.steel path:nth-child(even), .marked path:nth-child(even) { fill: none; }
.plate { fill: #b1b2b6; stroke: #606267; stroke-width: 1; }
.rim { fill: none; stroke: #606267; stroke-width: 2; }
.holes { fill: none; stroke: #45474b; stroke-width: 2; }
.nav-corner { fill: #b4b6ba; }
.nav-edge { fill: #fff; }
.nav-face { fill: #e6e7ea; }
.navcube text { font: 11px "Liberation Sans", sans-serif; fill: #505256; }
.axes { stroke-width: 2; }
.axes circle { fill: #dfe3e6; }
.axes text { font: 12px "Liberation Serif", serif; fill: #777; stroke: none; }
.view-tools { position: absolute; top: 7px; left: 50%; margin-left: -100px; display: flex; padding: 0 8px 0 4px; height: 36px; width: 200px; align-items: center; justify-content: space-around; background: rgba(252, 252, 253, .97); border-radius: 5px; box-shadow: 0 1px 3px rgba(30, 40, 60, .3); color: #26364a; }
.view-tools svg { width: 18px; height: 18px; }
.view-tools button:disabled { color: #b5b9be; }
.check-card { position: absolute; right: 12px; bottom: 11px; width: 300px; padding: 9px 6px 10px 8px; background: #fff; border-radius: 4px; box-shadow: 0 1px 3px rgba(30, 40, 60, .35); font-size: 11px; }
.check-card h2 { display: flex; align-items: center; gap: 7px; font-size: 12px; line-height: 18px; font-weight: 700; color: #b01c20; }
.check-card h2 svg { width: 18px; height: 18px; }
.rules { color: #b01c20; }
.rules svg { width: 12px; height: 12px; vertical-align: -2px; }
.hint { font-size: 10px; line-height: 14px; color: #e39a12; }
.check-card a { display: block; padding: 2px 12px 0; color: #1076d8; text-decoration: none; }
.doc-tabs { height: 27px; display: flex; background: #edf0f5; }
.doc-tab { display: flex; align-items: center; gap: 3px; padding: 4px 4px 0 10px; background: #fff; border-top: 2px solid #1677e8; border-right: 1px solid #cfd6e0; }
.doc-tab > svg { color: #1677e8; }
.doc-tab button { width: 10px; }
.doc-tab button svg { width: 12px; height: 12px; }

/* library */
.library { width: 311px; flex: none; display: flex; flex-direction: column; background: #fff; color: #1d2733; }
.library svg { width: 18px; height: 18px; }
.lib-head { display: flex; align-items: center; height: 30px; background: #f6f8fa; border-bottom: 1px solid #d3d9e1; }
.lib-head .on, .lib-tabs .on { background: #fff; color: #067bff; border-bottom: 2px solid #1677d8; }
.lib-head button { width: 35px; height: 29px; }
.lib-head span { flex: 1; padding-left: 6px; }
.lib-head .dots { width: 28px; }
.lib-head .dots svg { width: 16px; height: 16px; }
.lib-tabs { display: flex; align-items: center; height: 37px; background: #f6f8fa; color: #4c5866; }
.lib-tabs button { width: 35px; height: 37px; }
.lib-tabs .on { background: none; }
.lib-tabs span { padding-left: 1px; color: #1d2733; }
.lib-search { display: flex; align-items: center; gap: 4px; padding: 6px 5px 0 9px; color: #46535f; }
.lib-search label { flex: 1; display: flex; align-items: center; gap: 9px; height: 30px; padding-left: 6px; border: 1px solid #ccd2da; border-radius: 2px; }
.lib-search input { flex: 1; min-width: 0; font-size: 13px; }
.cats { display: flex; height: 34px; padding-left: 5px; overflow: hidden; color: #46535f; }
.cats button { flex: none; width: 32px; padding-bottom: 2px; }
.cats svg { width: 17px; height: 17px; }
.cats .on { background: #e3ecf8; color: #1f6bc0; border-bottom: 2px solid #1f62a8; padding-bottom: 0; }
.chips { display: flex; flex-wrap: wrap; gap: 2px 3px; padding: 2px 30px 0 7px; }
.chips button { height: 26px; padding: 0 6px; font-size: 10px; border: 1px solid #ccd2da; border-radius: 1px; }
.count { font-size: 10px; line-height: 21px; padding-left: 11px; color: #68727e; border-bottom: 1px solid #ccd6dc; }
.materials { flex: 1; min-height: 0; overflow: hidden; list-style: none; }
.materials li { display: flex; align-items: center; height: 30px; padding: 0 6px 0 10px; }
.materials i { width: 22px; height: 22px; border-radius: 4px; margin-right: 8px; background: repeating-linear-gradient(135deg, rgba(50, 58, 68, .16) 0 2px, transparent 2px 4px), linear-gradient(135deg, #a9afb6, #747c85); border: 1px solid #858c94; }
.materials b { flex: 1; font-size: 13px; font-weight: 500; }
.materials em { font-style: normal; font-weight: 400; }
.materials span { font-size: 11px; color: #7a838d; }
.finish { height: 20px; margin: 6px 6px 6px 7px; gap: 8px; background: #7b4fae; color: #fff; border-radius: 2px; font-weight: 700; font-size: 11px; }

/* status bar */
.status { flex: none; height: 24px; display: flex; align-items: center; padding: 0 0 0 10px; background: #e5e9f2; border-top: 1px solid #cfd5e0; color: #333f4e; font-size: 11px; }
.ready { flex: 1; }
.cell { display: flex; align-items: center; gap: 3px; padding: 0 7px; border-right: 1px solid #cdd3de; }
.cell.plain { border-color: transparent; }
.cell svg { width: 13px; height: 13px; }
.cell.meter { gap: 6px; padding-left: 0; }
.cell.plain.meter { padding-right: 3px; }
.cell.meter svg { width: 48px; height: 14px; }
.issues svg { color: #7c8590; }
```
